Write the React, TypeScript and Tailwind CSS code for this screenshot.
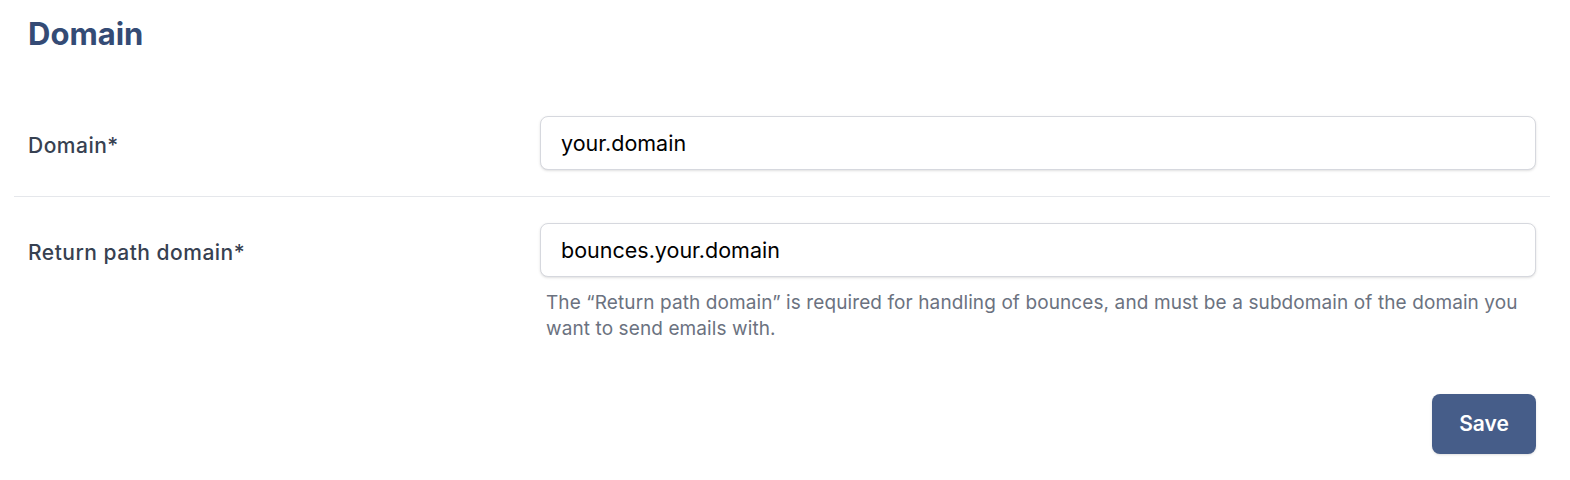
const font = { fontFamily: 'Inter, "Noto Sans", sans-serif' }

interface FieldRowProps {
  label: string
  value: string
  help?: string
  divider?: boolean
}

function FieldRow({ label, value, help, divider }: FieldRowProps) {
  return (
    <div className={`flex px-[14px] py-[26px] ${divider ? 'border-b border-[#e5e7eb]' : ''}`}>
      <div className="flex h-[54px] w-[512px] shrink-0 items-center pt-[5px]">
        <label className="text-[21px] font-medium tracking-[0.5px] text-[#374151]">{label}</label>
      </div>
      <div className="flex-1">
        <input
          readOnly
          value={value}
          className="h-[54px] w-full rounded-lg border border-[#d6d8de] bg-white px-5 text-[21.5px] text-black shadow-sm outline-none"
          style={font}
        />
        {help && (
          <p className="mt-[13px] px-[6px] text-[19px] leading-[26px] tracking-[0.1px] text-[#6b7280]">{help}</p>
        )}
      </div>
    </div>
  )
}

export default function App() {
  return (
    <div className="min-h-[480px] bg-white pl-[14px] pr-[20px] pt-[16px]" style={font}>
      <h1 className="px-[14px] text-[31px] leading-[36px] font-bold text-[#344b75]">Domain</h1>
      <div className="mt-[38px]">
        <FieldRow label="Domain*" value="your.domain" divider />
        <FieldRow
          label="Return path domain*"
          value="bounces.your.domain"
          help="The “Return path domain” is required for handling of bounces, and must be a subdomain of the domain you want to send emails with."
        />
      </div>
      <div className="flex justify-end px-[14px] pt-[26px]">
        <button className="h-[60px] w-[104px] rounded-lg bg-[#465d89] text-[21px] font-semibold text-white shadow-sm">
          Save
        </button>
      </div>
    </div>
  )
}
